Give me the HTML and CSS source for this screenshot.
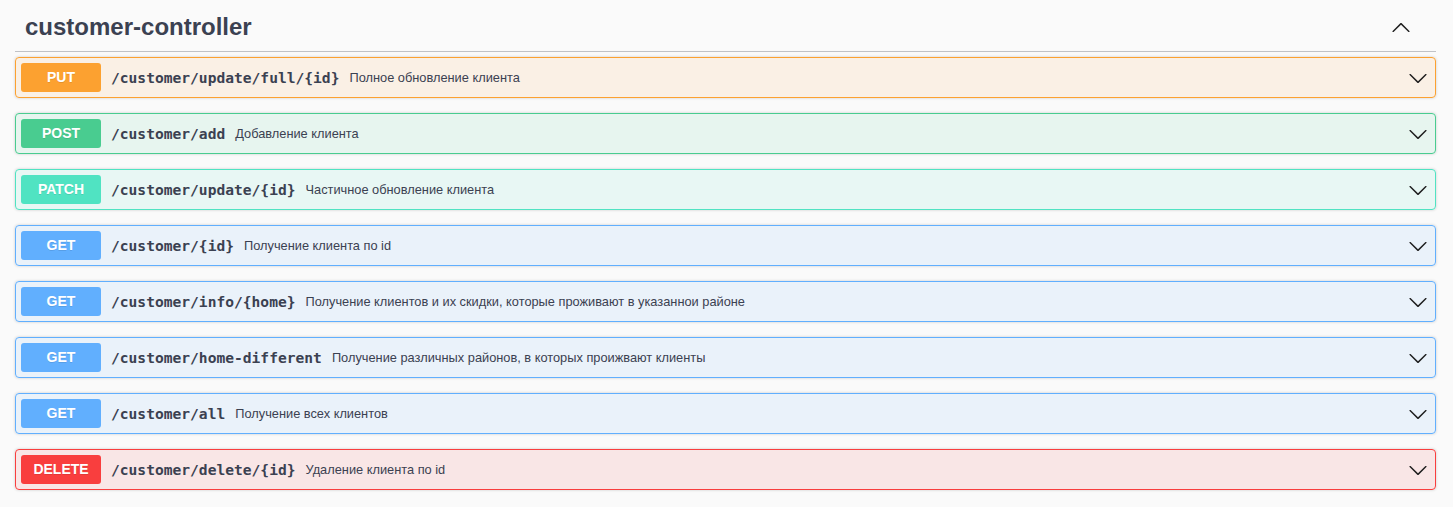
FILE: index.html
```html
<!DOCTYPE html>
<html>
<head>
<meta charset="utf-8">
<link rel="stylesheet" href="styles.css">
</head>
<body>
<div class="section">
  <div class="tag">
    <h3 class="tag-title">customer-controller</h3>
    <span class="tag-toggle">
      <svg width="20" height="20" viewBox="0 0 20 20"><path d="M17.418 14.908c.272.268.709.268.979 0s.271-.701 0-.969l-7.908-7.83c-.27-.268-.707-.268-.979 0l-7.908 7.83c-.27.268-.27.701 0 .969.271.268.709.268.979 0L10 7.767l7.418 7.141z"/></svg>
    </span>
  </div>

  <div class="op op-put">
    <span class="method">PUT</span>
    <span class="path">/customer/update/full/{id}</span>
    <span class="desc">Полное обновление клиента</span>
    <svg class="arrow" width="20" height="20" viewBox="0 0 20 20"><path d="M17.418 6.109c.272-.268.709-.268.979 0s.271.701 0 .969l-7.908 7.83c-.27.268-.707.268-.979 0l-7.908-7.83c-.27-.268-.27-.701 0-.969.271-.268.709-.268.979 0L10 13.25l7.418-7.141z"/></svg>
  </div>

  <div class="op op-post">
    <span class="method">POST</span>
    <span class="path">/customer/add</span>
    <span class="desc">Добавление клиента</span>
    <svg class="arrow" width="20" height="20" viewBox="0 0 20 20"><path d="M17.418 6.109c.272-.268.709-.268.979 0s.271.701 0 .969l-7.908 7.83c-.27.268-.707.268-.979 0l-7.908-7.83c-.27-.268-.27-.701 0-.969.271-.268.709-.268.979 0L10 13.25l7.418-7.141z"/></svg>
  </div>

  <div class="op op-patch">
    <span class="method">PATCH</span>
    <span class="path">/customer/update/{id}</span>
    <span class="desc">Частичное обновление клиента</span>
    <svg class="arrow" width="20" height="20" viewBox="0 0 20 20"><path d="M17.418 6.109c.272-.268.709-.268.979 0s.271.701 0 .969l-7.908 7.83c-.27.268-.707.268-.979 0l-7.908-7.83c-.27-.268-.27-.701 0-.969.271-.268.709-.268.979 0L10 13.25l7.418-7.141z"/></svg>
  </div>

  <div class="op op-get">
    <span class="method">GET</span>
    <span class="path">/customer/{id}</span>
    <span class="desc">Получение клиента по id</span>
    <svg class="arrow" width="20" height="20" viewBox="0 0 20 20"><path d="M17.418 6.109c.272-.268.709-.268.979 0s.271.701 0 .969l-7.908 7.83c-.27.268-.707.268-.979 0l-7.908-7.830c-.27-.268-.27-.701 0-.969.271-.268.709-.268.979 0L10 13.25l7.418-7.141z"/></svg>
  </div>

  <div class="op op-get">
    <span class="method">GET</span>
    <span class="path">/customer/info/{home}</span>
    <span class="desc">Получение клиентов и их скидки, которые проживают в указаннои районе</span>
    <svg class="arrow" width="20" height="20" viewBox="0 0 20 20"><path d="M17.418 6.109c.272-.268.709-.268.979 0s.271.701 0 .969l-7.908 7.83c-.27.268-.707.268-.979 0l-7.908-7.83c-.27-.268-.27-.701 0-.969.271-.268.709-.268.979 0L10 13.25l7.418-7.141z"/></svg>
  </div>

  <div class="op op-get">
    <span class="method">GET</span>
    <span class="path">/customer/home-different</span>
    <span class="desc">Получение различных районов, в которых проижвают клиенты</span>
    <svg class="arrow" width="20" height="20" viewBox="0 0 20 20"><path d="M17.418 6.109c.272-.268.709-.268.979 0s.271.701 0 .969l-7.908 7.83c-.27.268-.707.268-.979 0l-7.908-7.83c-.27-.268-.27-.701 0-.969.271-.268.709-.268.979 0L10 13.25l7.418-7.141z"/></svg>
  </div>

  <div class="op op-get">
    <span class="method">GET</span>
    <span class="path">/customer/all</span>
    <span class="desc">Получение всех клиентов</span>
    <svg class="arrow" width="20" height="20" viewBox="0 0 20 20"><path d="M17.418 6.109c.272-.268.709-.268.979 0s.271.701 0 .969l-7.908 7.83c-.27.268-.707.268-.979 0l-7.908-7.83c-.27-.268-.27-.701 0-.969.271-.268.709-.268.979 0L10 13.25l7.418-7.141z"/></svg>
  </div>

  <div class="op op-delete">
    <span class="method">DELETE</span>
    <span class="path">/customer/delete/{id}</span>
    <span class="desc">Удаление клиента по id</span>
    <svg class="arrow" width="20" height="20" viewBox="0 0 20 20"><path d="M17.418 6.109c.272-.268.709-.268.979 0s.271.701 0 .969l-7.908 7.83c-.27.268-.707.268-.979 0l-7.908-7.83c-.27-.268-.27-.701 0-.969.271-.268.709-.268.979 0L10 13.25l7.418-7.141z"/></svg>
  </div>
</div>
</body>
</html>
```

FILE: styles.css
```css
html, body {
  margin: 0;
  padding: 0;
  background: #fafafa;
}

body {
  font-family: "Liberation Sans", Arial, sans-serif;
  color: #3b4151;
}

.section {
  padding: 3px 17px 0 15px;
}

.tag {
  display: flex;
  align-items: center;
  padding: 10px 20px 10px 10px;
  border-bottom: 1px solid rgba(59, 65, 81, 0.3);
  margin: 0 0 5px;
}

.tag-title {
  margin: 0;
  flex: 1;
  font-size: 24px;
  line-height: 28px;
  font-weight: 700;
  color: #3b4151;
}

.tag-toggle {
  display: flex;
  width: 20px;
  height: 20px;
  margin-right: 5px;
}

.tag-toggle svg, .arrow {
  fill: #1f1f1f;
}

.op {
  display: flex;
  align-items: center;
  padding: 5px;
  margin: 0 0 15px;
  border: 1px solid;
  border-radius: 4px;
  box-shadow: 0 0 3px rgba(0, 0, 0, 0.19);
}

.method {
  min-width: 80px;
  padding: 6px 0;
  line-height: 17px;
  font-size: 14px;
  font-weight: 700;
  text-align: center;
  color: #fff;
  border-radius: 3px;
  text-shadow: 0 1px 0 rgba(0, 0, 0, 0.1);
}

.path {
  padding: 0 10px;
  font-family: "DejaVu Sans Mono", monospace;
  font-size: 14.6px;
  font-weight: 700;
  color: #3b4151;
}

.desc {
  font-size: 12.8px;
  color: #3b4151;
  flex: 1;
}

.arrow {
  flex: none;
  margin-right: 2px;
}

.op-put { background: rgba(252, 161, 48, 0.1); border-color: #fca130; }
.op-put .method { background: #fca130; }

.op-post { background: rgba(73, 204, 144, 0.1); border-color: #49cc90; }
.op-post .method { background: #49cc90; }

.op-patch { background: rgba(80, 227, 194, 0.1); border-color: #50e3c2; }
.op-patch .method { background: #50e3c2; }

.op-get { background: rgba(97, 175, 254, 0.1); border-color: #61affe; }
.op-get .method { background: #61affe; }

.op-delete { background: rgba(249, 62, 62, 0.1); border-color: #f93e3e; }
.op-delete .method { background: #f93e3e; }
```
